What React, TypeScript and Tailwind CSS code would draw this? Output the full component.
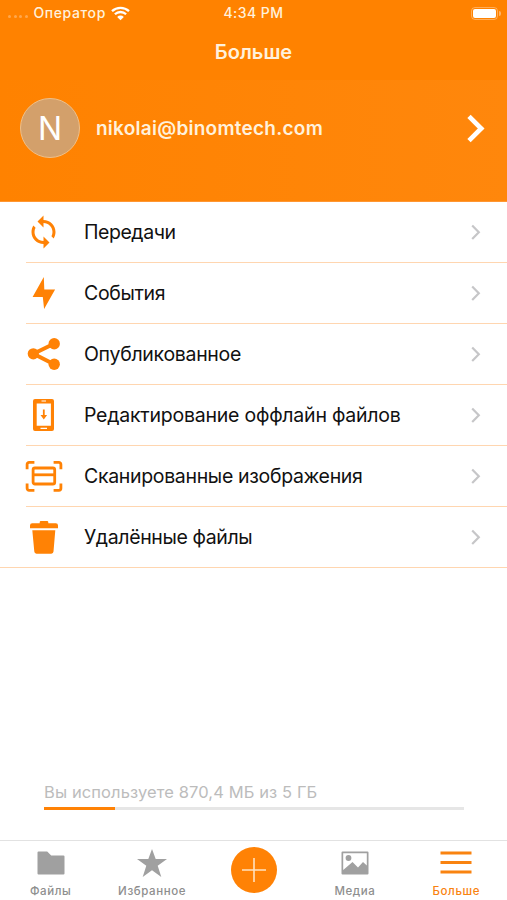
import type { ReactNode } from "react";
import clsx from "clsx";

const menuItems: { title: string; icon: ReactNode; tracking: string }[] = [
  {
    title: "Передачи",
    tracking: "tracking-[-0.45px]",
    icon: (
      <g transform="translate(1.5 2) scale(1.5)">
        <path d="M12 4V1L8 5l4 4V6c3.31 0 6 2.69 6 6 0 1.01-.25 1.97-.7 2.8l1.46 1.46C19.54 15.03 20 13.57 20 12c0-4.42-3.58-8-8-8zm0 14c-3.31 0-6-2.69-6-6 0-1.01.25-1.97.7-2.8L5.24 7.74C4.46 8.97 4 10.43 4 12c0 4.42 3.58 8 8 8v3l4-4-4-4v3z" />
      </g>
    ),
  },
  {
    title: "События",
    tracking: "tracking-[-0.35px]",
    icon: <path d="M19.8 4 8.6 24h10.2l1.3 12L31.1 16.5H20.3Z" />,
  },
  {
    title: "Опубликованное",
    tracking: "tracking-[-0.3px]",
    icon: (
      <>
        <path d="M30 9.7 9.5 19.7 30 30.3" fill="none" stroke="currentColor" strokeWidth="4" />
        <circle cx="9.3" cy="19.8" r="5.6" />
        <circle cx="30.2" cy="9.8" r="5.7" />
        <circle cx="30.2" cy="30.3" r="5.7" />
      </>
    ),
  },
  {
    title: "Редактирование оффлайн файлов",
    tracking: "tracking-[-0.23px]",
    icon: (
      <>
        <path
          fillRule="evenodd"
          d="M11 4h17a2 2 0 0 1 2 2v28a2 2 0 0 1-2 2H11a2 2 0 0 1-2-2V6a2 2 0 0 1 2-2Zm1.7 4.4v22.3h14.2V8.4ZM16.5 32.8v1.2h6.5v-1.2ZM17.5 5.6v.9h4.5v-.9Z"
        />
        <path d="M18.9 14.5h1.8v5.6h2.4l-3.3 4.4-3.3-4.4h2.4Z" />
      </>
    ),
  },
  {
    title: "Сканированные изображения",
    tracking: "tracking-[-0.33px]",
    icon: (
      <g fill="none" stroke="currentColor" strokeWidth="2.8">
        <path d="M3.1 13.3V8.4a2 2 0 0 1 2-2h5.3M29.6 6.4h5.3a2 2 0 0 1 2 2v4.9M36.9 27.4v4.9a2 2 0 0 1-2 2h-5.3M10.4 34.3H5.1a2 2 0 0 1-2-2v-4.9" />
        <rect x="9.1" y="12" width="21.6" height="16" rx="1.8" />
        <path d="M9 18.8h22" />
      </g>
    ),
  },
  {
    title: "Удалённые файлы",
    tracking: "tracking-[-0.38px]",
    icon: (
      <path d="M15.7 6.3V5.2a1.2 1.2 0 0 1 1.2-1.2h6.2a1.2 1.2 0 0 1 1.2 1.2v1.1h7.5a2.2 2.2 0 0 1 2.2 2.2v2.8H6V8.5a2.2 2.2 0 0 1 2.2-2.2ZM8.3 13.3h23l-1.8 21.3a2.2 2.2 0 0 1-2.2 2.1H12.5a2.2 2.2 0 0 1-2.2-2.1Z" />
    ),
  },
];

function StatusBar() {
  return (
    <div className="grid h-[26px] grid-cols-3 items-center text-[14px] font-medium text-[#fff1dc]">
      <div className="flex items-center pl-2">
        <div className="mt-1.5 flex gap-[2.5px]">
          {[0, 1, 2, 3].map((i) => (
            <span key={i} className="size-[3px] rounded-full bg-white/30" />
          ))}
        </div>
        <span className="mb-0.5 ml-[6px] tracking-[0.6px]">Оператор</span>
        <svg className="ml-[5px] h-[15px] w-[19px]" viewBox="0 0 19 15">
          <path d="M1 5.2a12.4 12.4 0 0 1 17 0M3.9 8.3a8 8 0 0 1 11.2 0" fill="none" stroke="#fff" strokeWidth="2.3" />
          <path d="M9.5 14.3 6.2 10.9a4.7 4.7 0 0 1 6.6 0Z" fill="#fff" />
        </svg>
      </div>
      <span className="mb-0.5 text-center tracking-[0.45px]">4:34 PM</span>
      <div className="flex items-center justify-end pr-[6px]">
        <div className="h-[13px] w-[27px] rounded-[4px] border border-white/35 p-px">
          <div className="h-full rounded-[2px] bg-white" />
        </div>
        <div className="ml-px h-[5px] w-[2px] rounded-r-full bg-white/40" />
      </div>
    </div>
  );
}

function MenuRow({ title, icon, tracking, last }: { title: string; icon: ReactNode; tracking: string; last: boolean }) {
  return (
    <div className={clsx("h-[61px]", !last && "pl-[26px]")}>
      <div className={clsx("flex h-full items-center border-b border-[#ffd6b0]", last && "pl-[26px]")}>
        <svg className="-ml-[2px] size-10 shrink-0 text-[#ff8205]" viewBox="0 0 40 40" fill="currentColor">
          {icon}
        </svg>
        <span className={clsx("mt-0.5 ml-5 flex-1 whitespace-nowrap text-[19.5px] text-[#111]", tracking)}>{title}</span>
        <svg className="mr-[25px] h-[17px] w-[12px]" viewBox="0 0 12 17" fill="none" stroke="#c6c6c8" strokeWidth="2.2">
          <path d="M2.2 1.500 8.800 8.200 2.200 14.900" />
        </svg>
      </div>
    </div>
  );
}

function Tab({ label, active, children }: { label: string; active?: boolean; children: ReactNode }) {
  return (
    <div className={clsx("flex flex-1 flex-col items-center", active ? "text-[#f98310]" : "text-[#a0a0a0]")}>
      <svg className="mt-[6px] h-8 w-9" viewBox="0 0 36 32" fill="currentColor">
        {children}
      </svg>
      <span className={clsx("mt-1 text-[11.5px] leading-4 font-medium tracking-[0.6px]", !active && "text-[#8e8e8e]")}>
        {label}
      </span>
    </div>
  );
}

export default function App() {
  return (
    <div className="flex h-[900px] w-[507px] flex-col overflow-hidden bg-white font-['Inter','Liberation_Sans',sans-serif]">
      {/* Header */}
      <header className="h-[202px] shrink-0 border-b border-[#ff9733] bg-[#ff8200]">
        <StatusBar />
        <h1 className="flex h-[54px] items-center justify-center pb-0.5 text-[20px] font-semibold text-[#fff1dc]">Больше</h1>
        <div className="flex h-[96px] items-center bg-linear-to-r from-[#ff8200] to-[#ff870c] px-5">
          <div className="flex size-[60px] items-center justify-center rounded-full border border-[#efc08a] bg-[#d3a06b] pt-0.5 text-[32px] text-white">
            N
          </div>
          <span className="mt-0.5 ml-4 flex-1 text-[19px] font-semibold tracking-[0.25px] text-[#fff1dc]">
            nikolai@binomtech.com
          </span>
          <svg className="h-[30px] w-5" viewBox="0 0 20 30" fill="none" stroke="#fff" strokeWidth="4.7">
            <path d="m2 3.300 12.200 12.200L2 27.700" />
          </svg>
        </div>
        <div className="h-[25px] bg-linear-to-r from-[#ff8200] to-[#ff870c]" />
      </header>

      {/* Menu */}
      <nav>
        {menuItems.map((item, i) => (
          <MenuRow key={item.title} {...item} last={i === menuItems.length - 1} />
        ))}
      </nav>

      {/* Storage usage */}
      <div className="mt-auto mb-[30px] px-11">
        <p className="text-[16.5px] leading-6 tracking-[0.1px] text-[#bcbcbc]">Вы используете 870,4 МБ из 5 ГБ</p>
        <div className="mt-[3px] h-[3px] w-[420px] bg-[#e6e6e6]">
          <div className="h-full w-[71px] bg-[#ff8205]" />
        </div>
      </div>

      {/* Tab bar */}
      <div className="flex h-[60px] shrink-0 border-t border-[#e2e2e2] bg-white">
        <Tab label="Файлы">
          <path d="M4.5 5.5a1 1 0 0 1 1-1h8.7l4 4h12.3a1 1 0 0 1 1 1v17a1 1 0 0 1-1 1h-25a1 1 0 0 1-1-1Z" />
        </Tab>
        <Tab label="Избранное">
          <path d="m18 2 3.7 10H33l-9.3 6.8L27.3 30 18 23.3 8.7 30l3.6-11.2L3 12h11.3Z" />
        </Tab>
        <div className="flex flex-1 justify-center pt-[6px]">
          <div className="size-[46px] rounded-full bg-[#ff8205]">
            <svg viewBox="0 0 46 46" stroke="#ffe2c0" strokeWidth="1.6">
              <path d="M23 11v24M11 23h24" />
            </svg>
          </div>
        </div>
        <Tab label="Медиа">
          <path
            fillRule="evenodd"
            d="M5.5 4.5h25a1 1 0 0 1 1 1v21a1 1 0 0 1-1 1h-25a1 1 0 0 1-1-1v-21a1 1 0 0 1 1-1ZM6.2 6.2V23l9.3-8 5.5 5.5 5-5.5 3.8 3.5V6.2Z"
          />
          <circle cx="11.5" cy="11" r="2.9" />
        </Tab>
        <Tab label="Больше" active>
          <path d="M2.5 4.5h31v3h-31ZM2.5 14h31v3h-31ZM2.5 23.5h31v3h-31Z" />
        </Tab>
      </div>
    </div>
  );
}
